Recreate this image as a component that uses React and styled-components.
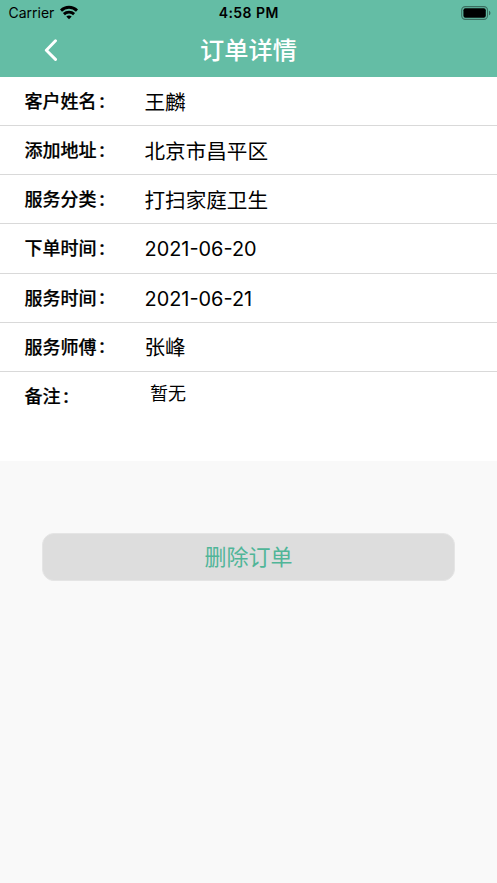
import React from 'react'
import styled, { createGlobalStyle } from 'styled-components'

const rows = [
  { label: '客户姓名', value: '王麟' },
  { label: '添加地址', value: '北京市昌平区' },
  { label: '服务分类', value: '打扫家庭卫生' },
  { label: '下单时间', value: '2021-06-20' },
  { label: '服务时间', value: '2021-06-21' },
  { label: '服务师傅', value: '张峰' },
]

const App = () => {
  return (
    <Page>
      <GlobalStyle />
      <Header>
        <StatusBar>
          <Carrier>
            Carrier
            <Wifi />
          </Carrier>
          <Time>4:58 PM</Time>
          <BatterySide>
            <Battery />
          </BatterySide>
        </StatusBar>
        <NavBar>
          <Back aria-label="返回">
            <svg width="14" height="22" viewBox="0 0 14 22" fill="none" stroke="#fff" strokeWidth="2.9" strokeLinecap="round" strokeLinejoin="round">
              <path d="M11.5 1.8 2.3 11.2l9.2 9.2" />
            </svg>
          </Back>
          <Title>订单详情</Title>
        </NavBar>
      </Header>

      <List>
        {rows.map(row => (
          <Row key={row.label}>
            <Label>{row.label}<Colon>:</Colon></Label>
            <Value $latin={/^\d/.test(row.value)}>{row.value}</Value>
          </Row>
        ))}
        <RemarkRow>
          <Label>备注<Colon>:</Colon></Label>
          <Remark>暂无</Remark>
        </RemarkRow>
      </List>

      <DeleteButton>删除订单</DeleteButton>
    </Page>
  )
}

const Wifi = () => (
  <svg width="18" height="16" viewBox="0 0 18 16" fill="none" stroke="#000" strokeWidth="2.9">
    <path d="M1 5.6C5.5 1.2 12.5 1.2 17 5.6" />
    <path d="M3.9 9.1c2.9-2.7 7.3-2.7 10.2 0" />
    <path d="M6.3 11.6c1.6-1.4 3.8-1.4 5.4 0L9 14.3z" fill="#000" stroke="none" />
  </svg>
)

const Battery = () => (
  <svg width="30" height="14" viewBox="0 0 30 14">
    <rect x="0.7" y="0.6" width="25.8" height="12.8" rx="3.6" fill="none" stroke="#000" strokeOpacity="0.42" strokeWidth="1.1" />
    <rect x="2.4" y="2.3" width="22.4" height="9.4" rx="2" fill="#000" />
    <path d="M28 4.7c1.9.7 1.9 3.9 0 4.6z" fill="#000" fillOpacity="0.45" />
  </svg>
)

const GlobalStyle = createGlobalStyle`
  * {
    box-sizing: border-box;
  }
  body {
    margin: 0;
    background: #f9f9f9;
    font-family: Inter, "Noto Sans CJK SC", sans-serif;
    color: #000;
  }
`

const Page = styled.div`
  display: flex;
  flex-direction: column;
  min-height: 883px;
  background: #f9f9f9;
`

const Header = styled.header`
  height: 77px;
  background: #64bda5;
`

const StatusBar = styled.div`
  display: grid;
  grid-template-columns: 1fr auto 1fr;
  align-items: center;
  height: 25px;
  padding: 0 6px 0 8.5px;
  font-size: 14px;
`

const Carrier = styled.div`
  display: flex;
  align-items: center;
  gap: 6px;
`

const Time = styled.div`
  margin-right: 2px;
  font-weight: 600;
  letter-spacing: 0.45px;
`

const BatterySide = styled.div`
  display: flex;
  justify-content: flex-end;
`

const NavBar = styled.div`
  display: grid;
  grid-template-columns: 100px 1fr 100px;
  align-items: center;
  height: 50px;
`

const Back = styled.button`
  display: flex;
  padding: 0 0 0 44px;
  border: 0;
  background: none;
`

const Title = styled.h1`
  margin: 0;
  font-family: "Noto Sans CJK SC", sans-serif;
  font-size: 24.2px;
  font-weight: 500;
  line-height: 46px;
  padding-bottom: 3px;
  text-align: center;
  color: #fff;
`

const List = styled.div`
  height: 384px;
  background: #fff;
`

const Row = styled.div`
  display: flex;
  align-items: center;
  height: 49.15px;
  padding-left: 24.5px;
  border-bottom: 1px solid #d9d9d9;
`

const RemarkRow = styled.div`
  display: flex;
  align-items: center;
  height: 49px;
  padding-left: 24.5px;
`

const Label = styled.div`
  width: 120px;
  padding-top: 2px;
  font-size: 18px;
  font-weight: 500;
  line-height: 26px;
  -webkit-text-stroke: 0.2px #000;
`

const Colon = styled.span`
  margin-left: 2.5px;
  font-size: 20px;
  line-height: 0;
  vertical-align: 0.5px;
`

const Value = styled.div`
  padding-top: ${props => (props.$latin ? '2px' : '3px')};
  font-size: ${props => (props.$latin ? '19.9px' : '20.6px')};
  line-height: 30px;
`

const Remark = styled.div`
  padding: 0 0 5px 5.5px;
  font-size: 18px;
  line-height: 26px;
`

const DeleteButton = styled.button`
  height: 48px;
  margin: 71.5px 42px 0;
  padding: 0 0 4px;
  border: 1px solid #e5e5e5;
  border-radius: 12px;
  background: #ddd;
  color: #50b598;
  font-family: "Noto Sans CJK SC", sans-serif;
  font-size: 22px;
`

export default App
